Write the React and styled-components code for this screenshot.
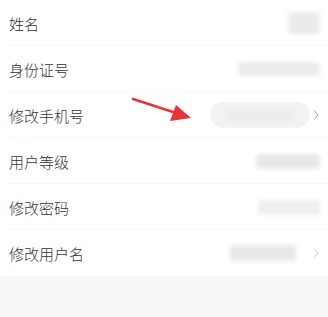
import styled, { createGlobalStyle } from "styled-components";

const GlobalStyle = createGlobalStyle`
  html, body {
    margin: 0;
    padding: 0;
    background: #f8f8fa;
  }
  body {
    font-family: "Noto Sans CJK SC", "Noto Sans", sans-serif;
  }
`;

/* 页面 */
const Page = styled.div`
  position: relative;
  width: 328px;
  height: 317px;
  background: #f8f8fa;
  overflow: hidden;
`;

/* 列表 */
const List = styled.div`
  background: #fff;
  display: flex;
  flex-direction: column;
`;

const Row = styled.div`
  height: 46px;
  padding: 0 8px 0 9px;
  display: flex;
  align-items: center;
  justify-content: space-between;
  box-sizing: border-box;
  background-image: ${(p) =>
    p.last ? "none" : "linear-gradient(#f7f7f8, #f7f7f8)"};
  background-size: calc(100% - 8px) 1px;
  background-position: 8px 100%;
  background-repeat: no-repeat;
`;

const Label = styled.span`
  font-size: 15px;
  font-weight: 300;
  color: #333;
`;

const Right = styled.div`
  display: flex;
  align-items: center;
  gap: ${(p) => p.gap || 2}px;
`;

/* 打码的值 */
const Blur = styled.div`
  width: ${(p) => p.w}px;
  height: ${(p) => p.h}px;
  background: ${(p) => p.bg || "#e9e9eb"};
  border-radius: ${(p) => p.r || 3}px;
  filter: blur(2px);
`;

const Pill = styled.div`
  width: 100px;
  height: 26px;
  border-radius: 13px;
  background: #f3f3f4;
  display: flex;
  align-items: center;
  justify-content: center;
`;

const Chevron = styled.svg`
  width: 8px;
  height: 12px;
  flex-shrink: 0;
`;

const Arrow = styled.svg`
  position: absolute;
  left: 130px;
  top: 94px;
  width: 66px;
  height: 30px;
`;

const ChevronIcon = ({ faded }) => (
  <Chevron viewBox="0 0 8 12">
    <path
      d="M2 1.5 L6 6 L2 10.5"
      fill="none"
      stroke={faded ? "#c8c8cc" : "#9a9aa0"}
      strokeWidth="1"
    />
  </Chevron>
);

const App = () => {
  return (
    <Page>
      <GlobalStyle />
      <List>
        <Row>
          <Label>姓名</Label>
          <Right>
            <Blur w={32} h={22} bg="#ebebed" />
          </Right>
        </Row>
        <Row>
          <Label>身份证号</Label>
          <Right>
            <Blur w={82} h={14} bg="#ececee" />
          </Right>
        </Row>
        <Row>
          <Label>修改手机号</Label>
          <Right>
            <Pill>
              <Blur w={70} h={12} bg="#ececee" />
            </Pill>
            <ChevronIcon />
          </Right>
        </Row>
        <Row>
          <Label>用户等级</Label>
          <Right>
            <Blur w={64} h={15} bg="#e8e8ea" />
          </Right>
        </Row>
        <Row>
          <Label>修改密码</Label>
          <Right>
            <Blur w={62} h={15} bg="#efeff1" />
          </Right>
        </Row>
        <Row last>
          <Label>修改用户名</Label>
          <Right gap={16}>
            <Blur w={66} h={16} bg="#e8e8ea" />
            <ChevronIcon faded />
          </Right>
        </Row>
      </List>
      <Arrow viewBox="0 0 66 30">
        <line x1="3" y1="5" x2="46" y2="19" stroke="#e8333a" strokeWidth="2.6" strokeLinecap="round" />
        <polygon points="61,24 40,27 46,11" fill="#e8333a" />
      </Arrow>
    </Page>
  );
};

export default App;
